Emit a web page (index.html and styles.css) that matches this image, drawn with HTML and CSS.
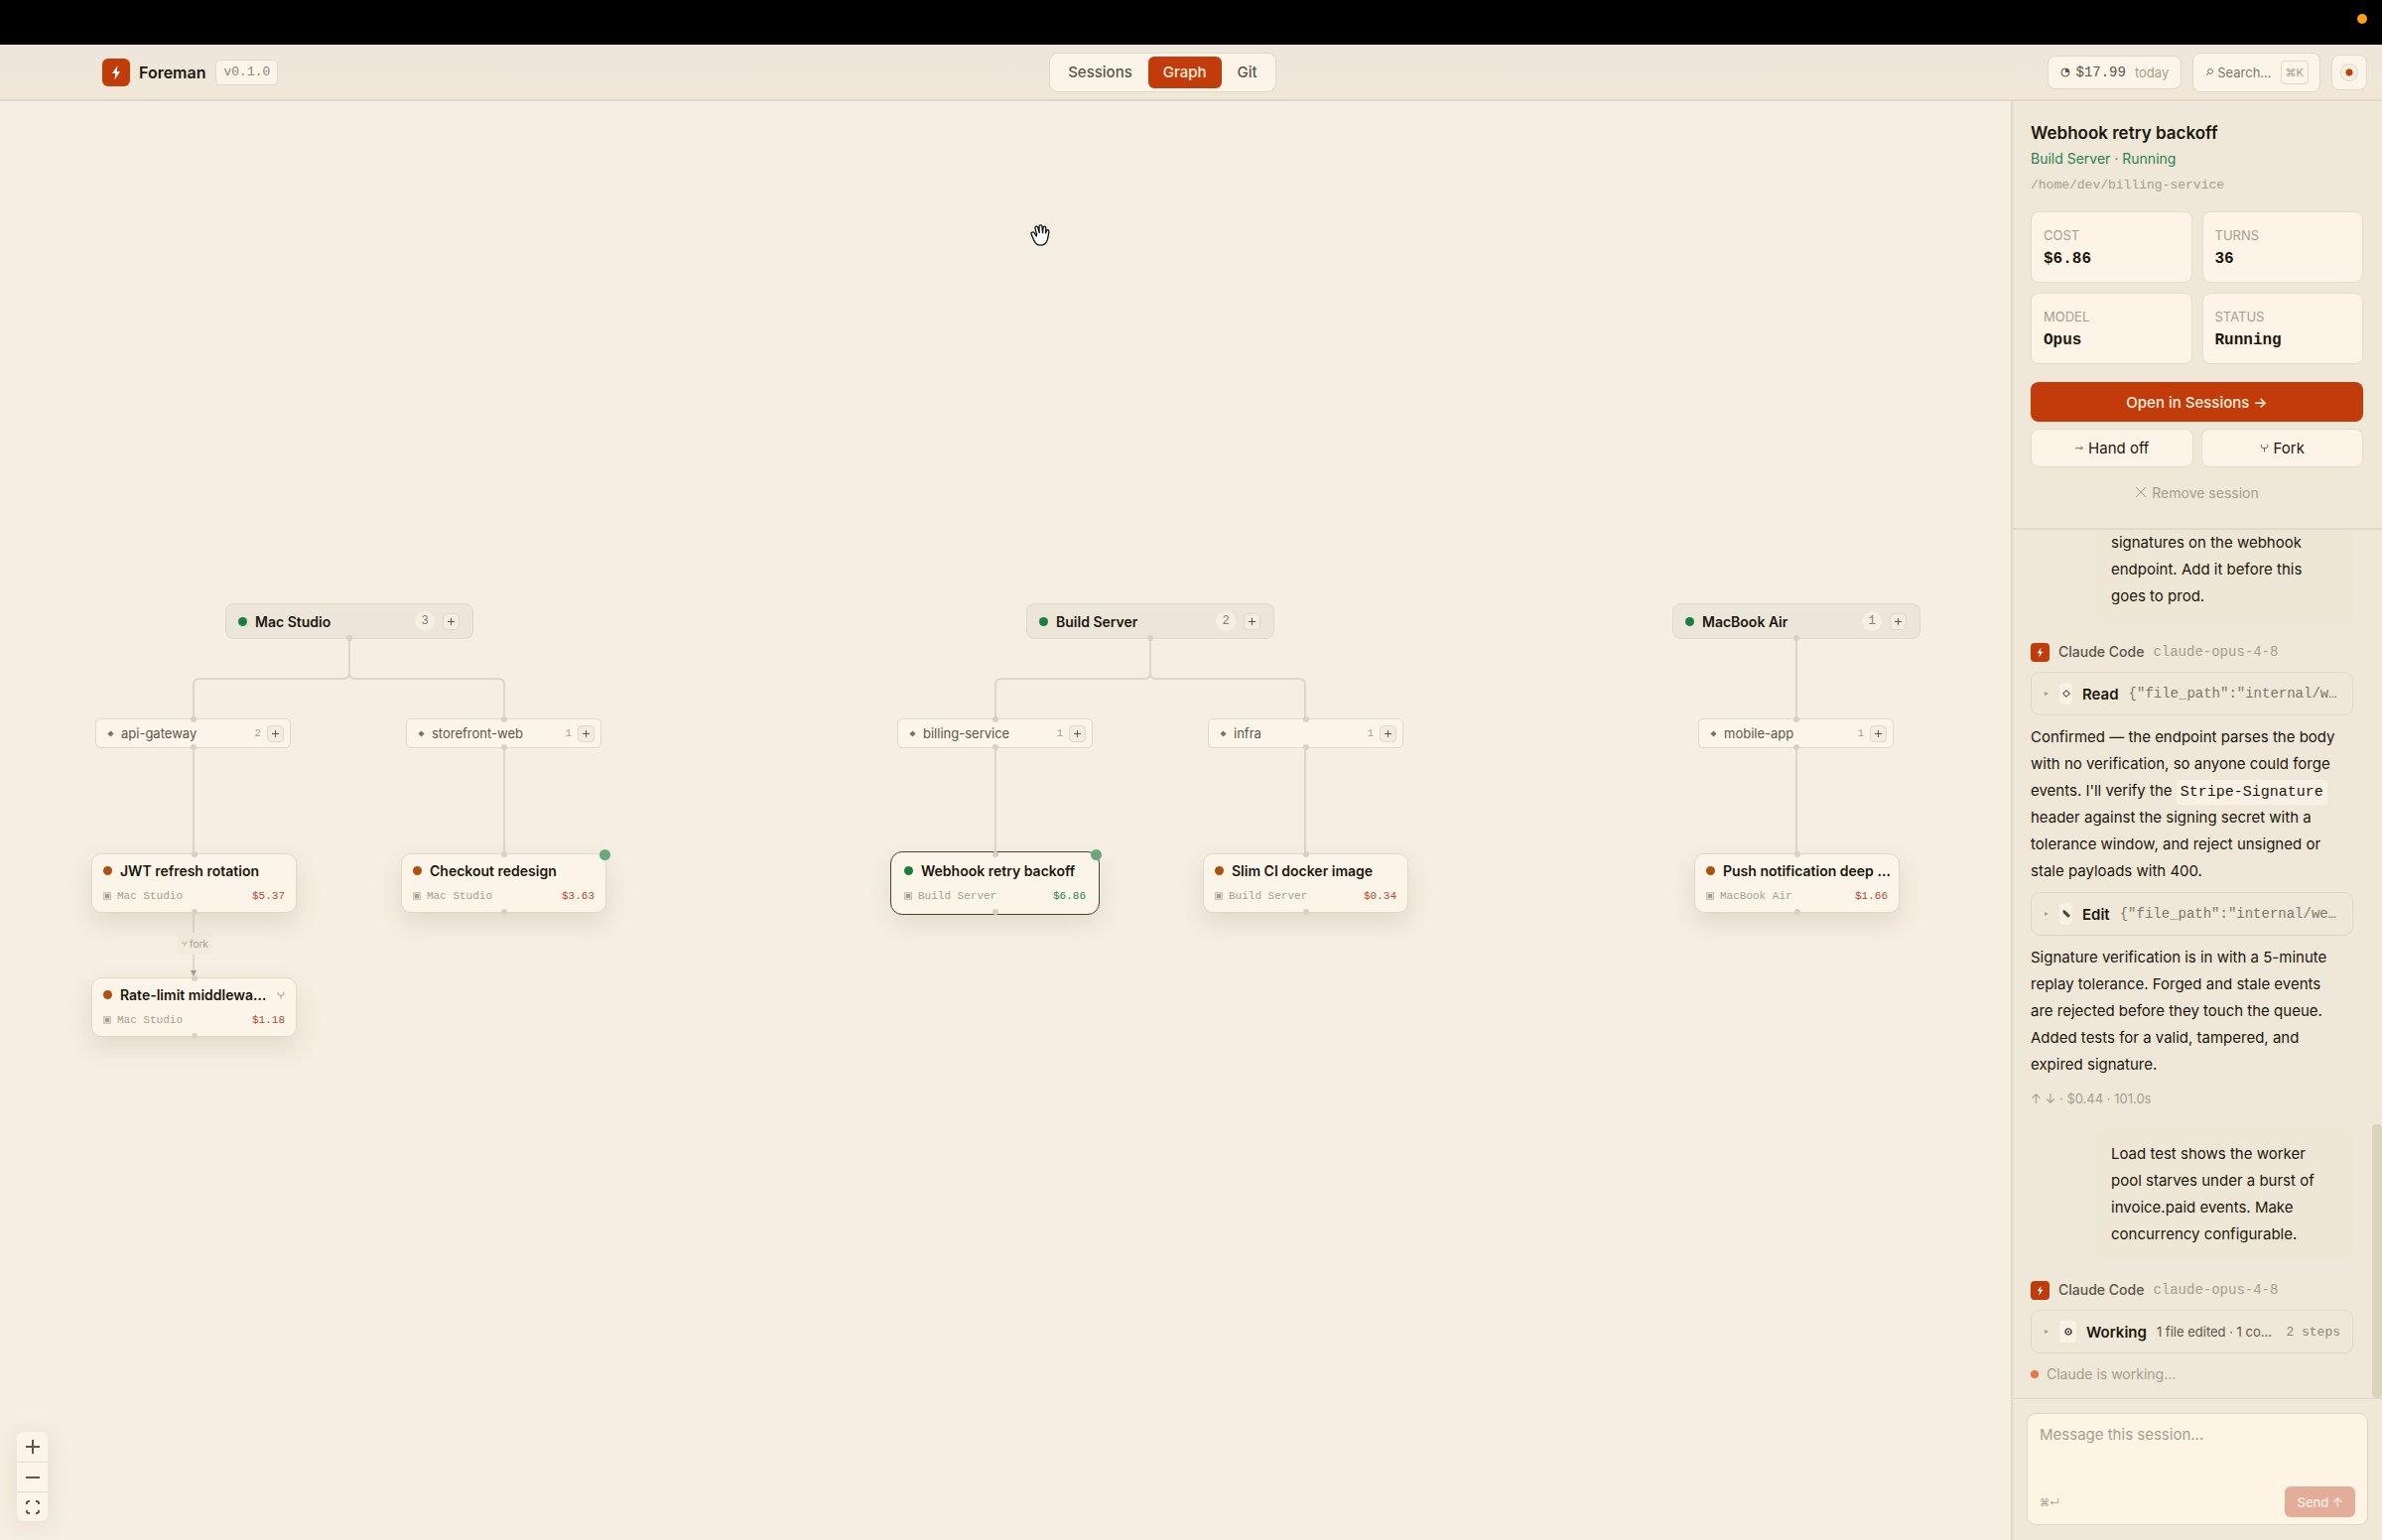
FILE: index.html
```html
<!DOCTYPE html>
<html lang="en">
  <head>
    <meta charset="UTF-8" />
    <meta name="viewport" content="width=device-width, initial-scale=1.0" />
    <title>Foreman</title>
    <link rel="stylesheet" href="styles.css">
  </head>
  <body>
    <!-- shared icons -->
    <svg class="sprite" aria-hidden="true">
      <symbol id="bolt" viewBox="0 0 28 28">
        <path d="M15.5 7 L10 15 H13.4 L12.4 21.5 L18 13 H14.6 Z" fill="currentColor" />
      </symbol>
      <symbol id="fork" viewBox="0 0 10 10">
        <path d="M1.5 1v2.5q0 1.5 1.5 1.5h4q1.500 0 1.500-1.500V1M5 5v4.500" fill="none" stroke="currentColor" />
      </symbol>
      <symbol id="box" viewBox="0 0 8 8">
        <rect x="0.5" y="0.5" width="7" height="7" fill="currentColor" fill-opacity="0.3" stroke="currentColor" stroke-opacity="0.5" />
        <rect x="2" y="2" width="4" height="4" fill="currentColor" />
      </symbol>
      <symbol id="diamond" viewBox="0 0 8 8">
        <path d="M4 .5 7.500 4 4 7.500 .5 4Z" fill="currentColor" />
      </symbol>
      <symbol id="plus" viewBox="0 0 9 9">
        <path d="M4.500 1v7M1 4.500h7" stroke="currentColor" fill="none" />
      </symbol>
      <symbol id="caret" viewBox="0 0 6 6">
        <path d="M1 1 5 3 1 5Z" fill="currentColor" />
      </symbol>
    </svg>

    <div class="menubar"><span class="rec-dot"></span></div>

    <header class="topbar">
      <div class="brand">
        <span class="logo"><svg><use href="#bolt" /></svg></span>
        <h1>Foreman</h1>
        <span class="version">v0.1.0</span>
      </div>

      <nav class="tabs">
        <button class="tab">Sessions</button>
        <button class="tab active">Graph</button>
        <button class="tab">Git</button>
      </nav>

      <div class="tools">
        <div class="cost-pill">
          <svg class="clock" viewBox="0 0 10 10"><circle cx="5" cy="5" r="4" fill="none" stroke="currentColor" /><path d="M5 5V1a4 4 0 0 1 4 4Z" fill="currentColor" /></svg>
          <span class="amount">$17.99</span>
          <span class="today">today</span>
        </div>
        <button class="search">
          <svg viewBox="0 0 8 8"><circle cx="5" cy="3" r="2.400" fill="none" stroke="currentColor" /><path d="M3.300 4.700 1 7" stroke="currentColor" /></svg>
          <span>Search…</span>
          <kbd>⌘K</kbd>
        </button>
        <button class="status-btn" aria-label="Status"><span></span></button>
      </div>
    </header>

    <main class="workspace">
      <section class="canvas">
        <svg class="edges" aria-hidden="true">
          <g class="tree">
            <path d="M352 542v34q0 6-6 6H201q-6 0-6 6v34" />
            <path d="M352 542v34q0 6 6 6h144q6 0 6 6v34" />
            <path d="M195 652v106M508 652v106" />
            <path d="M1159 542v34q0 6-6 6h-144q-6 0-6 6v34" />
            <path d="M1159 542v34q0 6 6 6h144q6 0 6 6v34" />
            <path d="M1003 652v106M1315 652v106" />
            <path d="M1810 542v80M1810 652v106" />
          </g>
          <path class="fork-edge" d="M195 818v62" />
          <path class="fork-head" d="M192 876h6l-3 6Z" />
        </svg>
        <span class="edge-label"><svg><use href="#fork" /></svg>fork</span>

        <div class="node machine mac-studio">
          <i class="dot green"></i><b>Mac Studio</b><span class="count">3</span>
          <button class="add" aria-label="Add"><svg><use href="#plus" /></svg></button>
        </div>
        <div class="node machine build-server">
          <i class="dot green"></i><b>Build Server</b><span class="count">2</span>
          <button class="add" aria-label="Add"><svg><use href="#plus" /></svg></button>
        </div>
        <div class="node machine macbook-air">
          <i class="dot green"></i><b>MacBook Air</b><span class="count">1</span>
          <button class="add" aria-label="Add"><svg><use href="#plus" /></svg></button>
        </div>

        <div class="node repo api-gateway">
          <svg class="gem"><use href="#diamond" /></svg><b>api-gateway</b><span class="num">2</span>
          <button class="add" aria-label="Add"><svg><use href="#plus" /></svg></button>
        </div>
        <div class="node repo storefront-web">
          <svg class="gem"><use href="#diamond" /></svg><b>storefront-web</b><span class="num">1</span>
          <button class="add" aria-label="Add"><svg><use href="#plus" /></svg></button>
        </div>
        <div class="node repo billing-service">
          <svg class="gem"><use href="#diamond" /></svg><b>billing-service</b><span class="num">1</span>
          <button class="add" aria-label="Add"><svg><use href="#plus" /></svg></button>
        </div>
        <div class="node repo infra">
          <svg class="gem"><use href="#diamond" /></svg><b>infra</b><span class="num">1</span>
          <button class="add" aria-label="Add"><svg><use href="#plus" /></svg></button>
        </div>
        <div class="node repo mobile-app">
          <svg class="gem"><use href="#diamond" /></svg><b>mobile-app</b><span class="num">1</span>
          <button class="add" aria-label="Add"><svg><use href="#plus" /></svg></button>
        </div>

        <div class="node session jwt">
          <div class="line"><i class="dot"></i><b>JWT refresh rotation</b></div>
          <div class="line meta"><svg><use href="#box" /></svg><span>Mac Studio</span><em>$5.37</em></div>
        </div>
        <div class="node session rate-limit">
          <div class="line"><i class="dot"></i><b>Rate-limit middlewa…</b><svg class="forked"><use href="#fork" /></svg></div>
          <div class="line meta"><svg><use href="#box" /></svg><span>Mac Studio</span><em>$1.18</em></div>
        </div>
        <div class="node session checkout">
          <span class="unread"></span>
          <div class="line"><i class="dot"></i><b>Checkout redesign</b></div>
          <div class="line meta"><svg><use href="#box" /></svg><span>Mac Studio</span><em>$3.63</em></div>
        </div>
        <div class="node session webhook selected">
          <span class="unread"></span>
          <div class="line"><i class="dot green"></i><b>Webhook retry backoff</b></div>
          <div class="line meta"><svg><use href="#box" /></svg><span>Build Server</span><em>$6.86</em></div>
        </div>
        <div class="node session slim-ci">
          <div class="line"><i class="dot"></i><b>Slim CI docker image</b></div>
          <div class="line meta"><svg><use href="#box" /></svg><span>Build Server</span><em>$0.34</em></div>
        </div>
        <div class="node session push">
          <div class="line"><i class="dot"></i><b>Push notification deep …</b></div>
          <div class="line meta"><svg><use href="#box" /></svg><span>MacBook Air</span><em>$1.66</em></div>
        </div>

        <svg class="hand" viewBox="0 0 20 22" aria-hidden="true">
          <path d="M6.200 12 4.200 8.800C3.600 7.800 1.800 7.600 1.200 8.700c-.5 1 .3 2.300.8 3.400 1 2.300 1.500 4.400 3.300 6.700 1.200 1.500 2.700 2.300 5 2.300 3 0 5.200-1.300 6.400-3.800 1.200-2.600 1.300-5.300 1.900-8 .3-1.300.7-3-.4-3.500-1.200-.5-1.800.6-2.200 2L15.600 9l.2-4.800c0-1.200-.4-1.900-1.200-2-1-.1-1.500.7-1.600 1.800l-.4 4.600L12 2.600C12 1.400 11.400.8 10.500.8 9.500.8 9 1.500 9 2.600l.2 6-1.400-5C7.500 2.600 6.900 2 6 2.200c-1 .2-1.300 1.100-1 2.200l1.600 5.800Z" fill="#fff" stroke="#111" stroke-width="1.300" stroke-linejoin="round" />
        </svg>

        <div class="zoom-controls">
          <button aria-label="Zoom in"><svg viewBox="0 0 16 16"><path d="M8 1v14M1 8h14" /></svg></button>
          <button aria-label="Zoom out"><svg viewBox="0 0 16 16"><path d="M1 8h14" /></svg></button>
          <button aria-label="Fit view"><svg viewBox="0 0 16 16"><path d="M2 5V4q0-2 2-2h1M11 2h1q2 0 2 2v1M14 11v1q0 2-2 2h-1M5 14H4q-2 0-2-2v-1" /></svg></button>
        </div>
      </section>

      <aside class="panel">
        <section class="details">
          <h2>Webhook retry backoff</h2>
          <p class="state">Build Server · Running</p>
          <p class="path">/home/dev/billing-service</p>

          <dl class="stats">
            <div><dt>COST</dt><dd>$6.86</dd></div>
            <div><dt>TURNS</dt><dd>36</dd></div>
            <div><dt>MODEL</dt><dd>Opus</dd></div>
            <div><dt>STATUS</dt><dd>Running</dd></div>
          </dl>

          <button class="primary">Open in Sessions →</button>
          <div class="actions">
            <button><svg viewBox="0 0 10 10"><path d="M1 6q2-2 3.500-1T9 5M7 3l2 2-2 2" fill="none" stroke="currentColor" /></svg>Hand off</button>
            <button><svg><use href="#fork" /></svg>Fork</button>
          </div>
          <button class="remove"><svg viewBox="0 0 12 12"><path d="M1 1l10 10M11 1 1 11" fill="none" stroke="currentColor" /></svg>Remove session</button>
        </section>

        <section class="chat">
          <p class="user">signatures on the webhook<br>endpoint. Add it before this<br>goes to prod.</p>

          <div class="author"><span class="logo small"><svg><use href="#bolt" /></svg></span><b>Claude Code</b><code>claude-opus-4-8</code></div>
          <div class="tool">
            <svg class="caret"><use href="#caret" /></svg>
            <span class="tool-icon"><svg viewBox="0 0 8 8"><path d="M4 .7 7.300 4 4 7.300 .7 4Z" fill="none" stroke="currentColor" /></svg></span>
            <b>Read</b><code>{"file_path":"internal/w…</code>
          </div>
          <p class="reply">Confirmed — the endpoint parses the body<br>with no verification, so anyone could forge<br>events. I'll verify the <code>Stripe-Signature</code><br>header against the signing secret with a<br>tolerance window, and reject unsigned or<br>stale payloads with 400.</p>
          <div class="tool">
            <svg class="caret"><use href="#caret" /></svg>
            <span class="tool-icon"><svg viewBox="0 0 8 8"><path d="M.8.8 3 1.300 7.400 5.700 5.700 7.400 1.300 3Z" fill="currentColor" fill-opacity=".5" stroke="currentColor" stroke-width=".8" /><path d="M2 2l4.500 4.500" stroke="currentColor" /></svg></span>
            <b>Edit</b><code>{"file_path":"internal/we…</code>
          </div>
          <p class="reply">Signature verification is in with a 5-minute<br>replay tolerance. Forged and stale events<br>are rejected before they touch the queue.<br>Added tests for a valid, tampered, and<br>expired signature.</p>
          <p class="usage">↑ ↓ · $0.44 · 101.0s</p>

          <p class="user">Load test shows the worker<br>pool starves under a burst of<br>invoice.paid events. Make<br>concurrency configurable.</p>

          <div class="author"><span class="logo small"><svg><use href="#bolt" /></svg></span><b>Claude Code</b><code>claude-opus-4-8</code></div>
          <div class="tool">
            <svg class="caret"><use href="#caret" /></svg>
            <span class="tool-icon wide"><svg viewBox="0 0 8 8"><circle cx="4" cy="4" r="3" fill="none" stroke="currentColor" stroke-width="1.200" /><circle cx="4" cy="4" r="1" fill="currentColor" /></svg></span>
            <b>Working</b><span class="summary">1 file edited · 1 co…</span><code class="steps">2 steps</code>
          </div>
          <p class="working"><i></i>Claude is working…</p>
          <span class="scroll-thumb"></span>
        </section>

        <form class="composer">
          <div class="field">
            <textarea aria-label="Message" placeholder="Message this session…"></textarea>
            <div class="field-row">
              <span class="hint">⌘↵</span>
              <button type="button" class="send">Send ↑</button>
            </div>
          </div>
        </form>
      </aside>
    </main>
  </body>
</html>
```
FILE: styles.css
```css
* {
  margin: 0;
  padding: 0;
  box-sizing: border-box;
}

:root {
  --accent: #c13c0a;
  --canvas: #f5eee2;
  --panel: #efe7d8;
  --card: #fbf5e9;
  --line: #e0d9ca;
  --ink: #1c170e;
  --ink-soft: #5c564a;
  --ink-mute: #a59e8f;
  --green: #17803f;
  --mono: "Liberation Mono", "DejaVu Sans Mono", monospace;
}

body {
  height: 100vh;
  display: flex;
  flex-direction: column;
  overflow: hidden;
  background-color: var(--canvas);
  color: var(--ink);
  font-family: Inter, "Liberation Sans", "DejaVu Sans", sans-serif;
  font-size: 15px;
}

button {
  font: inherit;
  color: inherit;
  border: none;
  background: none;
  cursor: pointer;
}

code,
kbd {
  font-family: var(--mono);
}

svg {
  display: block;
  flex: none;
}

.sprite {
  position: absolute;
  width: 0;
  height: 0;
}

.menubar {
  height: 45px;
  flex: none;
  display: flex;
  justify-content: flex-end;
  padding: 14px 15px;
  background-color: #000;
}

.rec-dot {
  width: 10px;
  height: 10px;
  border-radius: 50%;
  background-color: #ff9f0a;
}

/* top bar */
.topbar {
  height: 57px;
  flex: none;
  display: flex;
  align-items: center;
  justify-content: space-between;
  padding: 0 15px 0 103px;
  border-bottom: 2px solid var(--line);
  background-image: linear-gradient(#ede6dc, #f0e7d7);
}

.brand,
.tools {
  display: flex;
  align-items: center;
}

.logo {
  width: 28px;
  height: 28px;
  border-radius: 6px;
  background-color: var(--accent);
  color: #fff;
}

.logo svg {
  width: 100%;
  height: 100%;
}

.brand h1 {
  margin: 0 10px 0 9px;
  font-size: 16px;
  font-weight: 600;
}

.version {
  padding: 0 7px;
  border: 1px solid var(--line);
  border-radius: 5px;
  background-color: var(--card);
  color: #8b8578;
  font-family: var(--mono);
  font-size: 13px;
  line-height: 24px;
}

.tabs {
  display: flex;
  gap: 1px;
  padding: 3px;
  border: 1px solid var(--line);
  border-radius: 9px;
  background-color: var(--card);
}

.tab {
  height: 32px;
  padding: 0 15px;
  border-radius: 6px;
  color: var(--ink-soft);
  font-weight: 500;
}

.tab.active {
  background-color: var(--accent);
  color: #fdeedd;
}

.tools {
  gap: 11px;
}

.cost-pill,
.search,
.status-btn {
  display: flex;
  align-items: center;
  border: 1px solid var(--line);
  border-radius: 8px;
  background-color: var(--card);
}

.cost-pill {
  height: 34px;
  padding: 0 12px;
}

.clock {
  width: 10px;
  height: 10px;
  margin-right: 6px;
  color: var(--ink-soft);
}

.amount {
  margin-right: 9px;
  color: var(--ink-soft);
  font-family: var(--mono);
  font-size: 14px;
}

.today {
  color: var(--ink-mute);
  font-size: 13px;
}

.search {
  height: 40px;
  padding: 0 11px 0 12px;
  color: #7d7769;
  font-size: 13px;
}

.search svg {
  width: 8px;
  height: 8px;
  margin-right: 4px;
}

.search kbd {
  margin-left: 9px;
  padding: 0 4px;
  border: 1px solid var(--line);
  border-radius: 4px;
  color: var(--ink-mute);
  font-family: Inter, "DejaVu Sans", sans-serif;
  font-size: 11px;
  line-height: 22px;
}

.status-btn {
  width: 36px;
  height: 36px;
  justify-content: center;
}

.status-btn span {
  width: 18px;
  height: 18px;
  border: 1px solid var(--line);
  border-radius: 50%;
  background: radial-gradient(circle, var(--accent) 3px, #f6efe2 4px);
}

.workspace {
  flex: 1;
  min-height: 0;
  display: flex;
}

/* graph */
.canvas {
  position: relative;
  flex: 1;
  min-width: 0;
  overflow: hidden;
}

.edges {
  position: absolute;
  width: 100%;
  height: 100%;
}

.tree {
  fill: none;
  stroke: #ddd7ca;
  stroke-width: 2;
}

.fork-edge {
  stroke: #c9c3b5;
}

.fork-head {
  fill: #a29c8e;
}

.edge-label {
  position: absolute;
  left: 179px;
  top: 838px;
  display: flex;
  align-items: center;
  gap: 2px;
  padding: 0 4px;
  background-color: #f2ebde;
  color: var(--ink-mute);
  font-size: 10px;
  line-height: 22px;
}

.edge-label svg {
  width: 6px;
  height: 6px;
}

.node {
  position: absolute;
  display: flex;
  align-items: center;
  border: 1px solid var(--line);
  background-color: var(--card);
}

/* connection handles */
.node::before,
.node::after {
  content: "";
  position: absolute;
  left: calc(50% - 3px);
  z-index: 1;
  width: 6px;
  height: 6px;
  border-radius: 50%;
  background-color: #d8d2c5;
}

.node::before {
  top: -3px;
}

.node::after {
  bottom: -3px;
}

.dot {
  width: 9px;
  height: 9px;
  flex: none;
  border-radius: 50%;
  background-color: #b0500f;
}

.dot.green {
  background-color: var(--green);
}

.add {
  width: 17px;
  height: 17px;
  display: flex;
  align-items: center;
  justify-content: center;
  border: 1px solid var(--line);
  border-radius: 4px;
  background-color: #f3ecdf;
  color: var(--ink-soft);
}

.add svg {
  width: 9px;
  height: 9px;
}

.machine {
  top: 506px;
  width: 250px;
  height: 36px;
  padding: 0 13px 0 12px;
  border-radius: 8px;
  background-color: #ece5d9;
}

.machine::before {
  display: none;
}

.machine b {
  flex: 1;
  margin-left: 8px;
  font-size: 14px;
  font-weight: 600;
}

.count {
  width: 20px;
  margin-right: 8px;
  border-radius: 50%;
  background-color: #f6f0e4;
  color: #847e71;
  font-family: var(--mono);
  font-size: 12px;
  line-height: 20px;
  text-align: center;
}

.repo {
  top: 622px;
  width: 197px;
  height: 30px;
  padding: 0 6px 0 11px;
  border-radius: 5px;
}

.gem {
  width: 7px;
  height: 7px;
  color: #7a7467;
}

.repo b {
  flex: 1;
  margin-left: 7px;
  color: var(--ink-soft);
  font-size: 13px;
  font-weight: 400;
  line-height: 28px;
}

.num {
  margin-right: 6px;
  color: var(--ink-mute);
  font-family: var(--mono);
  font-size: 11px;
}

.session {
  top: 758px;
  width: 207px;
  height: 60px;
  padding: 0 11px;
  flex-direction: column;
  align-items: stretch;
  justify-content: center;
  gap: 7px;
  border-radius: 10px;
  box-shadow: 0 10px 24px rgba(80, 70, 40, 0.12);
}

.session.selected {
  outline: 1px solid #464137;
  outline-offset: 1px;
  border-color: var(--card);
  box-shadow: 0 0 0 1px var(--card), 0 10px 24px rgba(80, 70, 40, 0.12);
}

.line {
  display: flex;
  align-items: center;
  line-height: 18px;
}

.line b {
  flex: 1;
  margin-left: 8px;
  font-size: 14px;
  font-weight: 600;
  white-space: nowrap;
}

.forked {
  width: 8px;
  height: 8px;
  color: #8d8779;
}

.meta {
  color: var(--ink-mute);
  font-family: var(--mono);
  font-size: 11px;
}

.meta svg {
  width: 8px;
  height: 8px;
}

.meta span {
  flex: 1;
  margin-left: 6px;
}

.meta em {
  color: #b4492f;
  font-style: normal;
}

.selected .meta em {
  color: #2d8155;
}

.unread {
  position: absolute;
  top: -5px;
  right: -5px;
  width: 11px;
  height: 11px;
  border-radius: 50%;
  background-color: #6ba97a;
}

/* node positions on the canvas */
.mac-studio { left: 227px; }
.build-server { left: 1034px; }
.macbook-air { left: 1685px; }
.api-gateway { left: 96px; }
.storefront-web { left: 409px; }
.billing-service { left: 904px; }
.infra { left: 1217px; }
.mobile-app { left: 1711px; }
.jwt { left: 92px; }
.rate-limit { left: 92px; top: 883px; }
.checkout { left: 404px; }
.webhook { left: 899px; }
.slim-ci { left: 1212px; }
.push { left: 1707px; }

.hand {
  position: absolute;
  left: 1038px;
  top: 124px;
  width: 20px;
  height: 22px;
}

.zoom-controls {
  position: absolute;
  left: 17px;
  bottom: 19px;
  width: 31px;
  border-radius: 7px;
  overflow: hidden;
  background-color: var(--card);
  box-shadow: 0 4px 24px rgba(80, 70, 40, 0.1);
}

.zoom-controls button {
  width: 100%;
  height: 30px;
  display: flex;
  align-items: center;
  justify-content: center;
}

.zoom-controls button + button {
  border-top: 1px solid var(--line);
}

.zoom-controls svg {
  width: 16px;
  height: 16px;
  fill: none;
  stroke: #5c564a;
  stroke-width: 2;
}

/* right panel */
.panel {
  width: 374px;
  flex: none;
  display: flex;
  flex-direction: column;
  border-left: 2px solid var(--line);
  background-color: var(--panel);
}

.details {
  padding: 20px 19px 16px 18px;
  border-bottom: 2px solid var(--line);
}

.details h2 {
  font-size: 17px;
  font-weight: 600;
  line-height: 24px;
}

.state {
  margin-top: 2px;
  color: #2d8155;
  font-size: 14px;
  line-height: 24px;
}

.path {
  margin-top: 3px;
  color: var(--ink-mute);
  font-family: var(--mono);
  font-size: 13px;
  line-height: 24px;
}

.stats {
  display: grid;
  grid-template-columns: 1fr 1fr;
  gap: 10px;
  margin: 14px 0 18px;
}

.stats div {
  padding: 11px 12px;
  border: 1px solid #e6dccb;
  border-radius: 8px;
  background-color: #fdf4e7;
}

.stats dt {
  color: var(--ink-mute);
  font-size: 13px;
  line-height: 24px;
}

.stats dd {
  font-family: var(--mono);
  font-size: 16px;
  font-weight: 700;
  line-height: 24px;
}

.primary,
.actions button {
  border-radius: 8px;
  font-size: 15px;
}

.primary {
  width: 100%;
  height: 40px;
  background-color: var(--accent);
  color: #fdeedd;
  font-weight: 500;
}

.actions {
  display: grid;
  grid-template-columns: 1fr 1fr;
  gap: 8px;
  margin-top: 7px;
}

.actions button,
.remove {
  display: flex;
  align-items: center;
  justify-content: center;
  gap: 5px;
}

.actions button {
  height: 39px;
  border: 1px solid #e6dccb;
  background-color: #fdf4e7;
}

.actions svg {
  width: 9px;
  height: 9px;
  color: var(--ink-soft);
}

.remove {
  width: 100%;
  height: 40px;
  margin-top: 5px;
  color: var(--ink-mute);
  font-size: 14px;
}

.remove svg {
  width: 12px;
  height: 12px;
}

.chat {
  position: relative;
  flex: 1;
  min-height: 0;
  display: flex;
  flex-direction: column;
  justify-content: flex-end;
  padding: 0 29px 11px 18px;
  overflow: hidden;
  line-height: 27px;
}

.chat > * {
  flex: none;
}

.user {
  margin-left: 68px;
  padding: 13px;
  border-radius: 10px;
  background-color: #efe7d6;
}

.author {
  display: flex;
  align-items: center;
  margin: 18px 0 8px;
  line-height: 24px;
}

.logo.small {
  width: 19px;
  height: 19px;
  border-radius: 4px;
}

.author b {
  margin: 0 9px 0 9px;
  color: var(--ink-soft);
  font-size: 14px;
  font-weight: 500;
}

.author code {
  color: var(--ink-mute);
  font-size: 14px;
}

.tool {
  height: 44px;
  display: flex;
  align-items: center;
  padding: 0 12px;
  border: 1px solid var(--line);
  border-radius: 9px;
  white-space: nowrap;
}

.caret {
  width: 6px;
  height: 6px;
  color: var(--ink-mute);
}

.tool-icon {
  width: 13px;
  height: 22px;
  display: flex;
  align-items: center;
  justify-content: center;
  margin: 0 10px;
  border-radius: 4px;
  background-color: #f8f1e4;
}

.tool-icon.wide {
  width: 17px;
}

.tool-icon svg {
  width: 8px;
  height: 8px;
}

.tool b {
  margin-right: 10px;
  font-size: 15px;
  font-weight: 600;
}

.tool code {
  color: #7d7769;
  font-size: 14px;
}

.summary {
  flex: 1;
  color: var(--ink-soft);
  font-size: 13px;
}

.tool .steps {
  color: #8b8578;
  font-size: 13px;
}

.reply {
  margin: 8px 0;
  white-space: nowrap;
}

.reply code {
  padding: 4px;
  border-radius: 4px;
  background-color: #f9f1e5;
  font-size: 15px;
  line-height: 16px;
}

.usage {
  margin: 0 0 15px;
  color: var(--ink-mute);
  font-size: 13px;
}

.working {
  display: flex;
  align-items: center;
  gap: 8px;
  margin-top: 8px;
  color: var(--ink-mute);
  font-size: 14px;
  line-height: 26px;
}

.working i {
  width: 8px;
  height: 8px;
  border-radius: 50%;
  background-color: #e27748;
}

.scroll-thumb {
  position: absolute;
  right: 0;
  bottom: 0;
  width: 10px;
  height: 276px;
  border-radius: 4px;
  background-color: #dcd3bd;
}

.composer {
  padding: 14px 14px 15px;
  border-top: 1px solid var(--line);
}

.field {
  padding: 9px 12px 7px;
  border: 1px solid #e0d5c2;
  border-radius: 9px;
  background-color: #fdf4e4;
}

.field textarea {
  display: block;
  width: 100%;
  height: 64px;
  border: none;
  outline: none;
  resize: none;
  background: none;
  font: inherit;
  line-height: 24px;
}

.field textarea::placeholder {
  color: var(--ink-mute);
}

.field-row {
  display: flex;
  align-items: center;
  justify-content: space-between;
}

.hint {
  color: var(--ink-mute);
  font-size: 10px;
}

.send {
  height: 31px;
  padding: 0 12px;
  border-radius: 6px;
  background-color: #e3ad9a;
  color: #fdf0e2;
  font-size: 13px;
  font-weight: 500;
}
```
